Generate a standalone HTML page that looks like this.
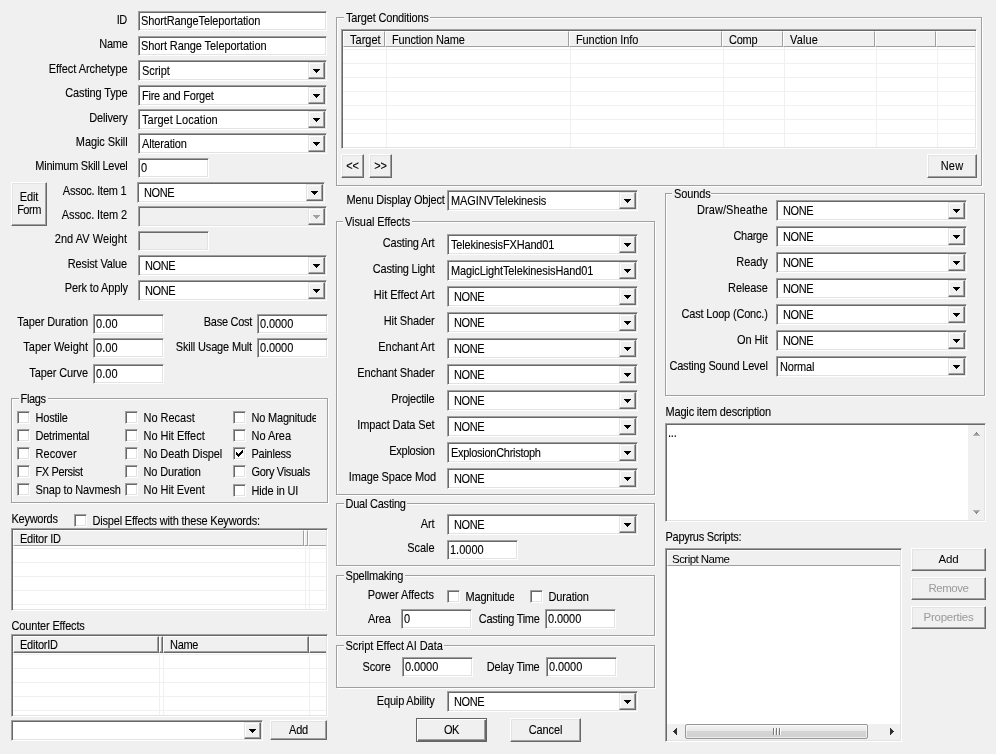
<!DOCTYPE html>
<html lang="en"><head><meta charset="utf-8"><title>Magic Effect</title>
<style>
html,body{margin:0;padding:0}
body{width:996px;height:754px;background:#f0f0f0;overflow:hidden;position:relative;font-family:"Liberation Sans",sans-serif;font-size:11px;color:#000}
div,i{box-sizing:border-box}
#g{position:absolute;left:0;top:0;width:996px;height:754px;will-change:transform;-webkit-text-stroke:0.1px #000}
.t{position:absolute;white-space:nowrap;line-height:13px;height:13px;font-size:11px;letter-spacing:-0.2px;transform:scaleY(1.09);transform-origin:0 10px}
.t.seg{font-size:11.5px;letter-spacing:-0.25px;transform:none}
.sunk{position:absolute;background:#fff;border:1px solid;border-color:#a0a0a0 #fff #fff #a0a0a0;box-shadow:inset 1px 1px 0 #696969,inset -1px -1px 0 #e3e3e3}
.sunk.dis{background:#f0f0f0}
.cb{position:absolute;width:17px;background:#f0f0f0;border:1px solid;border-color:#e3e3e3 #696969 #696969 #e3e3e3;box-shadow:inset -1px -1px 0 #a0a0a0,inset 1px 1px 0 #fff}
.cb i{position:absolute;left:4px;width:7px;height:4px;background:linear-gradient(#000,#000) 0 0/7px 1px no-repeat,linear-gradient(#000,#000) 1px 1px/5px 1px no-repeat,linear-gradient(#000,#000) 2px 2px/3px 1px no-repeat,linear-gradient(#000,#000) 3px 3px/1px 1px no-repeat}
.cb i.ad{background:linear-gradient(#a0a0a0,#a0a0a0) 0 0/7px 1px no-repeat,linear-gradient(#a0a0a0,#a0a0a0) 1px 1px/5px 1px no-repeat,linear-gradient(#a0a0a0,#a0a0a0) 2px 2px/3px 1px no-repeat,linear-gradient(#a0a0a0,#a0a0a0) 3px 3px/1px 1px no-repeat}
.btn{position:absolute;background:#f0f0f0;border:1px solid;border-color:#fff #696969 #696969 #fff;box-shadow:inset -1px -1px 0 #a0a0a0,inset 1px 1px 0 #e3e3e3}
.btn.def{border-color:#646464;box-shadow:inset 1px 1px 0 #fff,inset -1px -1px 0 #696969,inset -2px -2px 0 #a0a0a0}
.grp{position:absolute;border:1px solid #a0a0a0;box-shadow:1px 1px 0 #fff,inset 1px 1px 0 #fff}
.gl{position:absolute;background:#f0f0f0}
.chk{}
.hbg{position:absolute;background:#f0f0f0}
.hd{position:absolute}
.hd.flat{border-top:1px solid #fff;border-left:1px solid #fff;border-right:1px solid #a0a0a0;border-bottom:1px solid #a0a0a0}
.hd.flat.last{border-right:none}
.hd.btnh{border:1px solid;border-color:#fff #696969 #696969 #fff;box-shadow:inset -1px -1px 0 #a0a0a0}
.hd.btnh.last{border-right:none;box-shadow:inset 0 -1px 0 #a0a0a0}
.vg{position:absolute;width:1px;background:#f0f0f0}
.hg{position:absolute;height:1px;background:#f0f0f0}
.vsb{position:absolute;background:#f0f0f0}
.vsb i{position:absolute;left:5px;width:7px;height:4px}
.vsb i.up{top:7px;background:linear-gradient(#7a7a7a,#7a7a7a) 3px 0/1px 1px no-repeat,linear-gradient(#8c8c8c,#8c8c8c) 2px 1px/3px 1px no-repeat,linear-gradient(#a0a0a0,#a0a0a0) 1px 2px/5px 1px no-repeat,linear-gradient(#b4b4b4,#b4b4b4) 0 3px/7px 1px no-repeat}
.vsb i.dn{top:85px;background:linear-gradient(#b4b4b4,#b4b4b4) 0 0/7px 1px no-repeat,linear-gradient(#a0a0a0,#a0a0a0) 1px 1px/5px 1px no-repeat,linear-gradient(#8c8c8c,#8c8c8c) 2px 2px/3px 1px no-repeat,linear-gradient(#7a7a7a,#7a7a7a) 3px 3px/1px 1px no-repeat}
.hsb{position:absolute;background:#f0f0f0}
.hsb i.la{position:absolute;left:6px;top:4px;width:4px;height:7px;background:linear-gradient(#303030,#303030) 0 3px/1px 1px no-repeat,linear-gradient(#303030,#303030) 1px 2px/1px 3px no-repeat,linear-gradient(#303030,#303030) 2px 1px/1px 5px no-repeat,linear-gradient(#303030,#303030) 3px 0/1px 7px no-repeat}
.hsb i.ra{position:absolute;left:223px;top:4px;width:4px;height:7px;background:linear-gradient(#303030,#303030) 3px 3px/1px 1px no-repeat,linear-gradient(#303030,#303030) 2px 2px/1px 3px no-repeat,linear-gradient(#303030,#303030) 1px 1px/1px 5px no-repeat,linear-gradient(#303030,#303030) 0 0/1px 7px no-repeat}
.thumb{position:absolute;border:1px solid #979797;border-radius:2px;background:linear-gradient(#f4f4f4 0%,#e8e8e8 45%,#d4d4d4 50%,#d0d0d0 100%);box-shadow:inset 0 0 0 1px rgba(255,255,255,.6)}
.grip{position:absolute;left:87px;top:3px;width:8px;height:7px;background:linear-gradient(90deg,#787878 0 1px,#fff 1px 2px,transparent 2px 3px,#787878 3px 4px,#fff 4px 5px,transparent 5px 6px,#787878 6px 7px,#fff 7px 8px)}
</style></head>
<body>
<div id="g">
<div class="t " style="top:14px;left:-173.5px;width:300px;text-align:right;letter-spacing:-0.6px;">ID</div>
<div class="t " style="top:38px;left:-172.5px;width:300px;text-align:right;letter-spacing:-0.286px;">Name</div>
<div class="t " style="top:63px;left:-172.5px;width:300px;text-align:right;letter-spacing:-0.075px;">Effect Archetype</div>
<div class="t " style="top:87px;left:-172.5px;width:300px;text-align:right;letter-spacing:-0.151px;">Casting Type</div>
<div class="t " style="top:112px;left:-172.5px;width:300px;text-align:right;letter-spacing:-0.192px;">Delivery</div>
<div class="t " style="top:136px;left:-172.5px;width:300px;text-align:right;letter-spacing:-0.08px;">Magic Skill</div>
<div class="t " style="top:160px;left:-172.5px;width:300px;text-align:right;letter-spacing:-0.263px;">Minimum Skill Level</div>
<div class="t " style="top:185px;left:-173.5px;width:300px;text-align:right;letter-spacing:-0.226px;">Assoc. Item 1</div>
<div class="t " style="top:209px;left:-173px;width:300px;text-align:right;letter-spacing:-0.111px;">Assoc. Item 2</div>
<div class="t " style="top:233px;left:-173px;width:300px;text-align:right;letter-spacing:0.033px;">2nd AV Weight</div>
<div class="t " style="top:258px;left:-173px;width:300px;text-align:right;letter-spacing:-0.145px;">Resist Value</div>
<div class="t " style="top:282px;left:-172px;width:300px;text-align:right;letter-spacing:-0.125px;">Perk to Apply</div>
<div class="sunk" style="left:138px;top:11px;width:189px;height:20px"></div>
<div class="t " style="top:15px;left:141px;letter-spacing:-0.109px;">ShortRangeTeleportation</div>
<div class="sunk" style="left:138px;top:36px;width:189px;height:20px"></div>
<div class="t " style="top:40px;left:141px;letter-spacing:-0.086px;">Short Range Teleportation</div>
<div class="sunk" style="left:138px;top:60px;width:189px;height:21px"><div class="cb" style="left:169px;top:1px;height:17px"><i class="a" style="top:6px"></i></div></div>
<div class="t " style="top:65px;left:142px;letter-spacing:-0.071px;">Script</div>
<div class="sunk" style="left:138px;top:85px;width:189px;height:21px"><div class="cb" style="left:169px;top:1px;height:17px"><i class="a" style="top:6px"></i></div></div>
<div class="t " style="top:90px;left:142px;letter-spacing:-0.234px;">Fire and Forget</div>
<div class="sunk" style="left:138px;top:109px;width:189px;height:21px"><div class="cb" style="left:169px;top:1px;height:17px"><i class="a" style="top:6px"></i></div></div>
<div class="t " style="top:114px;left:142px;letter-spacing:0.032px;">Target Location</div>
<div class="sunk" style="left:138px;top:133px;width:189px;height:21px"><div class="cb" style="left:169px;top:1px;height:17px"><i class="a" style="top:6px"></i></div></div>
<div class="t " style="top:138px;left:142px;letter-spacing:-0.178px;">Alteration</div>
<div class="sunk" style="left:138px;top:158px;width:71px;height:20px"></div>
<div class="t " style="top:162px;left:141px;">0</div>
<div class="btn" style="left:11px;top:182px;width:36px;height:44px"></div>
<div class="t " style="top:191px;left:-121px;width:300px;text-align:center;letter-spacing:-0.067px;">Edit</div>
<div class="t " style="top:204px;left:-121px;width:300px;text-align:center;letter-spacing:-0.493px;">Form</div>
<div class="sunk" style="left:137px;top:182px;width:188px;height:21px"><div class="cb" style="left:168px;top:1px;height:17px"><i class="a" style="top:6px"></i></div></div>
<div class="t " style="top:187px;left:144px;letter-spacing:-0.395px;">NONE</div>
<div class="sunk dis" style="left:138px;top:206px;width:189px;height:21px"><div class="cb" style="left:169px;top:1px;height:17px"><i class="ad" style="top:6px"></i></div></div>
<div class="sunk dis" style="left:138px;top:231px;width:71px;height:20px"></div>
<div class="sunk" style="left:138px;top:255px;width:189px;height:21px"><div class="cb" style="left:169px;top:1px;height:17px"><i class="a" style="top:6px"></i></div></div>
<div class="t " style="top:260px;left:145px;letter-spacing:-0.395px;">NONE</div>
<div class="sunk" style="left:138px;top:280px;width:189px;height:21px"><div class="cb" style="left:169px;top:1px;height:17px"><i class="a" style="top:6px"></i></div></div>
<div class="t " style="top:285px;left:145px;letter-spacing:-0.395px;">NONE</div>
<div class="t " style="top:316px;left:-212px;width:300px;text-align:right;letter-spacing:-0.104px;">Taper Duration</div>
<div class="t " style="top:341px;left:-212px;width:300px;text-align:right;letter-spacing:0.008px;">Taper Weight</div>
<div class="t " style="top:367px;left:-212px;width:300px;text-align:right;letter-spacing:-0.111px;">Taper Curve</div>
<div class="sunk" style="left:93px;top:314px;width:71px;height:20px"></div>
<div class="t " style="top:318px;left:96px;letter-spacing:0.07px;">0.00</div>
<div class="sunk" style="left:93px;top:338px;width:71px;height:20px"></div>
<div class="t " style="top:342px;left:96px;letter-spacing:0.07px;">0.00</div>
<div class="sunk" style="left:93px;top:364px;width:71px;height:20px"></div>
<div class="t " style="top:368px;left:96px;letter-spacing:0.07px;">0.00</div>
<div class="t " style="top:316px;left:-48px;width:300px;text-align:right;letter-spacing:-0.283px;">Base Cost</div>
<div class="t " style="top:341px;left:-48px;width:300px;text-align:right;letter-spacing:-0.166px;">Skill Usage Mult</div>
<div class="sunk" style="left:257px;top:314px;width:71px;height:20px"></div>
<div class="t " style="top:318px;left:260px;letter-spacing:-0.076px;">0.0000</div>
<div class="sunk" style="left:257px;top:338px;width:71px;height:20px"></div>
<div class="t " style="top:342px;left:260px;letter-spacing:-0.076px;">0.0000</div>
<div class="grp" style="left:11px;top:398px;width:317px;height:105px"></div>
<div class="gl" style="left:18.5px;top:396px;width:29px;height:6px"></div>
<div class="t " style="top:393px;left:20.5px;letter-spacing:-0.341px;">Flags</div>
<div class="sunk chk" style="left:17px;top:411px;width:13px;height:13px"></div>
<div class="t " style="top:412px;left:35.5px;letter-spacing:-0.204px;">Hostile</div>
<div class="sunk chk" style="left:125px;top:411px;width:13px;height:13px"></div>
<div class="t " style="top:412px;left:143.5px;letter-spacing:-0.018px;">No Recast</div>
<div class="sunk chk" style="left:233px;top:411px;width:13px;height:13px"></div>
<div class="t " style="top:412px;left:251.5px;letter-spacing:-0.192px;width:64.5px;overflow:hidden;">No Magnitude</div>
<div class="sunk chk" style="left:17px;top:429px;width:13px;height:13px"></div>
<div class="t " style="top:430px;left:35.5px;letter-spacing:-0.232px;">Detrimental</div>
<div class="sunk chk" style="left:125px;top:429px;width:13px;height:13px"></div>
<div class="t " style="top:430px;left:143.5px;letter-spacing:-0.027px;">No Hit Effect</div>
<div class="sunk chk" style="left:233px;top:429px;width:13px;height:13px"></div>
<div class="t " style="top:430px;left:251.5px;letter-spacing:-0.036px;">No Area</div>
<div class="sunk chk" style="left:17px;top:447px;width:13px;height:13px"></div>
<div class="t " style="top:448px;left:35.5px;letter-spacing:0.033px;">Recover</div>
<div class="sunk chk" style="left:125px;top:447px;width:13px;height:13px"></div>
<div class="t " style="top:448px;left:143.5px;letter-spacing:-0.093px;">No Death Dispel</div>
<div class="sunk chk" style="left:233px;top:447px;width:13px;height:13px"><svg width="7" height="7" viewBox="0 0 7 7" style="position:absolute;left:2px;top:2px"><path d="M0 2h1v3h-1zM1 3h1v3h-1zM2 4h1v3h-1zM3 3h1v3h-1zM4 2h1v3h-1zM5 1h1v3h-1zM6 0h1v3h-1z" fill="#000" shape-rendering="crispEdges"/></svg></div>
<div class="t " style="top:448px;left:251.5px;letter-spacing:-0.26px;">Painless</div>
<div class="sunk chk" style="left:17px;top:465px;width:13px;height:13px"></div>
<div class="t " style="top:466px;left:35.5px;letter-spacing:-0.353px;">FX Persist</div>
<div class="sunk chk" style="left:125px;top:465px;width:13px;height:13px"></div>
<div class="t " style="top:466px;left:143.5px;letter-spacing:-0.137px;">No Duration</div>
<div class="sunk chk" style="left:233px;top:465px;width:13px;height:13px"></div>
<div class="t " style="top:466px;left:251.5px;letter-spacing:-0.313px;">Gory Visuals</div>
<div class="sunk chk" style="left:17px;top:483px;width:13px;height:13px"></div>
<div class="t " style="top:484px;left:35.5px;letter-spacing:-0.149px;">Snap to Navmesh</div>
<div class="sunk chk" style="left:125px;top:483px;width:13px;height:13px"></div>
<div class="t " style="top:484px;left:143.5px;letter-spacing:-0.046px;">No Hit Event</div>
<div class="sunk chk" style="left:233px;top:484px;width:13px;height:13px"></div>
<div class="t " style="top:485px;left:251.5px;letter-spacing:-0.16px;">Hide in UI</div>
<div class="t " style="top:513px;left:11.5px;letter-spacing:-0.262px;">Keywords</div>
<div class="sunk chk" style="left:74px;top:514px;width:13px;height:13px"></div>
<div class="t " style="top:515px;left:92.5px;letter-spacing:-0.19px;">Dispel Effects with these Keywords:</div>
<div class="sunk" style="left:11px;top:528px;width:317px;height:83px"></div>
<div class="hbg flat" style="left:13px;top:530px;width:313px;height:16px"></div>
<div class="hd flat" style="left:13px;top:530px;width:291px;height:16px"></div>
<div class="t " style="top:533px;left:20px;letter-spacing:-0.233px;">Editor ID</div>
<div class="vg" style="left:305px;top:546px;height:63px"></div>
<div class="hd flat" style="left:304px;top:530px;width:4px;height:16px"></div>
<div class="vg" style="left:309px;top:546px;height:63px"></div>
<div class="hd flat last" style="left:308px;top:530px;width:18px;height:16px"></div>
<div class="hg" style="left:13px;top:548px;width:313px"></div>
<div class="hg" style="left:13px;top:562px;width:313px"></div>
<div class="hg" style="left:13px;top:576px;width:313px"></div>
<div class="hg" style="left:13px;top:590px;width:313px"></div>
<div class="hg" style="left:13px;top:604px;width:313px"></div>
<div class="t " style="top:620px;left:11.5px;letter-spacing:-0.162px;">Counter Effects</div>
<div class="sunk" style="left:11px;top:634px;width:317px;height:83px"></div>
<div class="hbg btnh" style="left:13px;top:636px;width:313px;height:17px"></div>
<div class="hd btnh" style="left:13px;top:636px;width:146px;height:17px"></div>
<div class="t " style="top:639px;left:20px;letter-spacing:-0.256px;">EditorID</div>
<div class="vg" style="left:159px;top:653px;height:62px"></div>
<div class="hd btnh" style="left:159px;top:636px;width:4px;height:17px"></div>
<div class="vg" style="left:163px;top:653px;height:62px"></div>
<div class="hd btnh" style="left:163px;top:636px;width:146px;height:17px"></div>
<div class="t " style="top:639px;left:170px;letter-spacing:-0.286px;">Name</div>
<div class="vg" style="left:309px;top:653px;height:62px"></div>
<div class="hd btnh last" style="left:309px;top:636px;width:17px;height:17px"></div>
<div class="hg" style="left:13px;top:654px;width:313px"></div>
<div class="hg" style="left:13px;top:668px;width:313px"></div>
<div class="hg" style="left:13px;top:682px;width:313px"></div>
<div class="hg" style="left:13px;top:696px;width:313px"></div>
<div class="hg" style="left:13px;top:710px;width:313px"></div>
<div class="sunk" style="left:11px;top:720px;width:252px;height:21px"><div class="cb" style="left:232px;top:1px;height:17px"><i class="a" style="top:6px"></i></div></div>
<div class="btn" style="left:270px;top:720px;width:57px;height:20px"></div>
<div class="t " style="top:724px;left:148.5px;width:300px;text-align:center;">Add</div>
<div class="grp" style="left:336px;top:17px;width:646px;height:169px"></div>
<div class="gl" style="left:344px;top:15px;width:86px;height:6px"></div>
<div class="t " style="top:12px;left:346px;letter-spacing:-0.171px;">Target Conditions</div>
<div class="sunk" style="left:341px;top:29px;width:636px;height:120px"></div>
<div class="hbg flat" style="left:343px;top:31px;width:632px;height:16px"></div>
<div class="hd flat" style="left:343px;top:31px;width:42px;height:16px"></div>
<div class="t " style="top:34px;left:350px;letter-spacing:0.02px;">Target</div>
<div class="vg" style="left:386px;top:47px;height:100px"></div>
<div class="hd flat" style="left:385px;top:31px;width:184px;height:16px"></div>
<div class="t " style="top:34px;left:392px;letter-spacing:-0.146px;">Function Name</div>
<div class="vg" style="left:570px;top:47px;height:100px"></div>
<div class="hd flat" style="left:569px;top:31px;width:153px;height:16px"></div>
<div class="t " style="top:34px;left:576px;letter-spacing:-0.107px;">Function Info</div>
<div class="vg" style="left:723px;top:47px;height:100px"></div>
<div class="hd flat" style="left:722px;top:31px;width:61px;height:16px"></div>
<div class="t " style="top:34px;left:729px;letter-spacing:-0.261px;">Comp</div>
<div class="vg" style="left:784px;top:47px;height:100px"></div>
<div class="hd flat" style="left:783px;top:31px;width:92px;height:16px"></div>
<div class="t " style="top:34px;left:790px;letter-spacing:0.134px;">Value</div>
<div class="vg" style="left:876px;top:47px;height:100px"></div>
<div class="hd flat" style="left:875px;top:31px;width:61px;height:16px"></div>
<div class="vg" style="left:937px;top:47px;height:100px"></div>
<div class="hd flat last" style="left:936px;top:31px;width:39px;height:16px"></div>
<div class="hg" style="left:343px;top:49px;width:632px"></div>
<div class="hg" style="left:343px;top:63px;width:632px"></div>
<div class="hg" style="left:343px;top:77px;width:632px"></div>
<div class="hg" style="left:343px;top:91px;width:632px"></div>
<div class="hg" style="left:343px;top:105px;width:632px"></div>
<div class="hg" style="left:343px;top:119px;width:632px"></div>
<div class="hg" style="left:343px;top:133px;width:632px"></div>
<div class="btn" style="left:341px;top:154px;width:23px;height:24px"></div>
<div class="t " style="top:160px;left:202.5px;width:300px;text-align:center;">&lt;&lt;</div>
<div class="btn" style="left:369px;top:154px;width:23px;height:24px"></div>
<div class="t " style="top:160px;left:230.5px;width:300px;text-align:center;">&gt;&gt;</div>
<div class="btn" style="left:927px;top:154px;width:50px;height:24px"></div>
<div class="t " style="top:160px;left:802.0px;width:300px;text-align:center;letter-spacing:0.195px;">New</div>
<div class="t " style="top:194px;left:346.5px;letter-spacing:-0.174px;">Menu Display Object</div>
<div class="sunk" style="left:447px;top:190px;width:191px;height:21px"><div class="cb" style="left:171px;top:1px;height:17px"><i class="a" style="top:6px"></i></div></div>
<div class="t " style="top:195px;left:451px;letter-spacing:-0.118px;">MAGINVTelekinesis</div>
<div class="grp" style="left:336px;top:221px;width:319px;height:274px"></div>
<div class="gl" style="left:343px;top:219px;width:68.5px;height:6px"></div>
<div class="t " style="top:216px;left:345px;letter-spacing:-0.075px;">Visual Effects</div>
<div class="t " style="top:237px;left:134.5px;width:300px;text-align:right;letter-spacing:-0.192px;">Casting Art</div>
<div class="sunk" style="left:447px;top:234px;width:191px;height:21px"><div class="cb" style="left:171px;top:1px;height:17px"><i class="a" style="top:6px"></i></div></div>
<div class="t " style="top:239px;left:451px;letter-spacing:-0.168px;">TelekinesisFXHand01</div>
<div class="t " style="top:263px;left:134.5px;width:300px;text-align:right;letter-spacing:-0.194px;">Casting Light</div>
<div class="sunk" style="left:447px;top:260px;width:191px;height:21px"><div class="cb" style="left:171px;top:1px;height:17px"><i class="a" style="top:6px"></i></div></div>
<div class="t " style="top:265px;left:451px;letter-spacing:-0.123px;">MagicLightTelekinesisHand01</div>
<div class="t " style="top:289px;left:134.5px;width:300px;text-align:right;letter-spacing:-0.017px;">Hit Effect Art</div>
<div class="sunk" style="left:447px;top:286px;width:191px;height:21px"><div class="cb" style="left:171px;top:1px;height:17px"><i class="a" style="top:6px"></i></div></div>
<div class="t " style="top:291px;left:454px;letter-spacing:-0.395px;">NONE</div>
<div class="t " style="top:315px;left:134.5px;width:300px;text-align:right;letter-spacing:-0.128px;">Hit Shader</div>
<div class="sunk" style="left:447px;top:312px;width:191px;height:21px"><div class="cb" style="left:171px;top:1px;height:17px"><i class="a" style="top:6px"></i></div></div>
<div class="t " style="top:317px;left:454px;letter-spacing:-0.395px;">NONE</div>
<div class="t " style="top:341px;left:134.5px;width:300px;text-align:right;letter-spacing:-0.061px;">Enchant Art</div>
<div class="sunk" style="left:447px;top:338px;width:191px;height:21px"><div class="cb" style="left:171px;top:1px;height:17px"><i class="a" style="top:6px"></i></div></div>
<div class="t " style="top:343px;left:454px;letter-spacing:-0.395px;">NONE</div>
<div class="t " style="top:367px;left:134.5px;width:300px;text-align:right;letter-spacing:-0.121px;">Enchant Shader</div>
<div class="sunk" style="left:447px;top:364px;width:191px;height:21px"><div class="cb" style="left:171px;top:1px;height:17px"><i class="a" style="top:6px"></i></div></div>
<div class="t " style="top:369px;left:454px;letter-spacing:-0.395px;">NONE</div>
<div class="t " style="top:393px;left:134.5px;width:300px;text-align:right;letter-spacing:-0.205px;">Projectile</div>
<div class="sunk" style="left:447px;top:390px;width:191px;height:21px"><div class="cb" style="left:171px;top:1px;height:17px"><i class="a" style="top:6px"></i></div></div>
<div class="t " style="top:395px;left:454px;letter-spacing:-0.395px;">NONE</div>
<div class="t " style="top:419px;left:134.5px;width:300px;text-align:right;letter-spacing:-0.112px;">Impact Data Set</div>
<div class="sunk" style="left:447px;top:416px;width:191px;height:21px"><div class="cb" style="left:171px;top:1px;height:17px"><i class="a" style="top:6px"></i></div></div>
<div class="t " style="top:421px;left:454px;letter-spacing:-0.395px;">NONE</div>
<div class="t " style="top:445px;left:134.5px;width:300px;text-align:right;letter-spacing:-0.278px;">Explosion</div>
<div class="sunk" style="left:447px;top:442px;width:191px;height:21px"><div class="cb" style="left:171px;top:1px;height:17px"><i class="a" style="top:6px"></i></div></div>
<div class="t " style="top:447px;left:451px;letter-spacing:-0.282px;">ExplosionChristoph</div>
<div class="t " style="top:471px;left:136px;width:300px;text-align:right;letter-spacing:-0.139px;">Image Space Mod</div>
<div class="sunk" style="left:447px;top:468px;width:191px;height:21px"><div class="cb" style="left:171px;top:1px;height:17px"><i class="a" style="top:6px"></i></div></div>
<div class="t " style="top:473px;left:454px;letter-spacing:-0.395px;">NONE</div>
<div class="grp" style="left:336px;top:503px;width:319px;height:63px"></div>
<div class="gl" style="left:343.5px;top:501px;width:63.5px;height:6px"></div>
<div class="t " style="top:498px;left:345.5px;letter-spacing:-0.232px;">Dual Casting</div>
<div class="t " style="top:518px;left:134.5px;width:300px;text-align:right;letter-spacing:-0.121px;">Art</div>
<div class="sunk" style="left:447px;top:514px;width:191px;height:21px"><div class="cb" style="left:171px;top:1px;height:17px"><i class="a" style="top:6px"></i></div></div>
<div class="t " style="top:519px;left:454px;letter-spacing:-0.395px;">NONE</div>
<div class="t " style="top:542px;left:134.5px;width:300px;text-align:right;letter-spacing:-0.066px;">Scale</div>
<div class="sunk" style="left:447px;top:540px;width:71px;height:20px"></div>
<div class="t " style="top:544px;left:450px;letter-spacing:0.007px;">1.0000</div>
<div class="grp" style="left:336px;top:575px;width:319px;height:61px"></div>
<div class="gl" style="left:343.5px;top:573px;width:61px;height:6px"></div>
<div class="t " style="top:570px;left:345.5px;letter-spacing:-0.202px;">Spellmaking</div>
<div class="t " style="top:589px;left:134px;width:300px;text-align:right;letter-spacing:-0.066px;">Power Affects</div>
<div class="sunk chk" style="left:447px;top:590px;width:13px;height:13px"></div>
<div class="t " style="top:591px;left:465.5px;letter-spacing:-0.186px;width:48px;overflow:hidden;">Magnitude</div>
<div class="sunk chk" style="left:530px;top:590px;width:13px;height:13px"></div>
<div class="t " style="top:591px;left:548.5px;letter-spacing:-0.172px;">Duration</div>
<div class="t " style="top:613px;left:368px;letter-spacing:-0.138px;">Area</div>
<div class="sunk" style="left:401px;top:609px;width:71px;height:20px"></div>
<div class="t " style="top:613px;left:404px;">0</div>
<div class="t " style="top:613px;left:239.5px;width:300px;text-align:right;letter-spacing:-0.292px;">Casting Time</div>
<div class="sunk" style="left:545px;top:609px;width:71px;height:20px"></div>
<div class="t " style="top:613px;left:548px;letter-spacing:-0.076px;">0.0000</div>
<div class="grp" style="left:336px;top:645px;width:319px;height:43px"></div>
<div class="gl" style="left:343.5px;top:643px;width:100.5px;height:6px"></div>
<div class="t " style="top:640px;left:345.5px;letter-spacing:-0.049px;">Script Effect AI Data</div>
<div class="t " style="top:661px;left:362.5px;letter-spacing:-0.11px;">Score</div>
<div class="sunk" style="left:402px;top:657px;width:71px;height:20px"></div>
<div class="t " style="top:661px;left:405px;letter-spacing:-0.076px;">0.0000</div>
<div class="t " style="top:661px;left:239.5px;width:300px;text-align:right;letter-spacing:-0.233px;">Delay Time</div>
<div class="sunk" style="left:546px;top:657px;width:71px;height:20px"></div>
<div class="t " style="top:661px;left:549px;letter-spacing:-0.076px;">0.0000</div>
<div class="t " style="top:695px;left:134.5px;width:300px;text-align:right;letter-spacing:-0.172px;">Equip Ability</div>
<div class="sunk" style="left:447px;top:691px;width:191px;height:21px"><div class="cb" style="left:171px;top:1px;height:17px"><i class="a" style="top:6px"></i></div></div>
<div class="t " style="top:696px;left:454px;letter-spacing:-0.395px;">NONE</div>
<div class="btn def" style="left:416px;top:718px;width:71px;height:24px"></div>
<div class="t " style="top:724px;left:301.5px;width:300px;text-align:center;letter-spacing:-0.353px;">OK</div>
<div class="btn" style="left:510px;top:718px;width:71px;height:24px"></div>
<div class="t " style="top:724px;left:395.5px;width:300px;text-align:center;letter-spacing:-0.092px;">Cancel</div>
<div class="grp" style="left:665px;top:193px;width:320px;height:203px"></div>
<div class="gl" style="left:672px;top:191px;width:39px;height:6px"></div>
<div class="t " style="top:188px;left:674px;letter-spacing:-0.102px;">Sounds</div>
<div class="t " style="top:204px;left:467.70000000000005px;width:300px;text-align:right;letter-spacing:0.082px;">Draw/Sheathe</div>
<div class="sunk" style="left:776px;top:200px;width:191px;height:21px"><div class="cb" style="left:171px;top:1px;height:17px"><i class="a" style="top:6px"></i></div></div>
<div class="t " style="top:205px;left:783px;letter-spacing:-0.395px;">NONE</div>
<div class="t " style="top:230px;left:467.70000000000005px;width:300px;text-align:right;letter-spacing:-0.313px;">Charge</div>
<div class="sunk" style="left:776px;top:226px;width:191px;height:21px"><div class="cb" style="left:171px;top:1px;height:17px"><i class="a" style="top:6px"></i></div></div>
<div class="t " style="top:231px;left:783px;letter-spacing:-0.395px;">NONE</div>
<div class="t " style="top:256px;left:467.70000000000005px;width:300px;text-align:right;letter-spacing:-0.079px;">Ready</div>
<div class="sunk" style="left:776px;top:252px;width:191px;height:21px"><div class="cb" style="left:171px;top:1px;height:17px"><i class="a" style="top:6px"></i></div></div>
<div class="t " style="top:257px;left:783px;letter-spacing:-0.395px;">NONE</div>
<div class="t " style="top:282px;left:467.70000000000005px;width:300px;text-align:right;letter-spacing:-0.108px;">Release</div>
<div class="sunk" style="left:776px;top:278px;width:191px;height:21px"><div class="cb" style="left:171px;top:1px;height:17px"><i class="a" style="top:6px"></i></div></div>
<div class="t " style="top:283px;left:783px;letter-spacing:-0.395px;">NONE</div>
<div class="t " style="top:308px;left:467.70000000000005px;width:300px;text-align:right;letter-spacing:-0.186px;">Cast Loop (Conc.)</div>
<div class="sunk" style="left:776px;top:304px;width:191px;height:21px"><div class="cb" style="left:171px;top:1px;height:17px"><i class="a" style="top:6px"></i></div></div>
<div class="t " style="top:309px;left:783px;letter-spacing:-0.395px;">NONE</div>
<div class="t " style="top:334px;left:467.70000000000005px;width:300px;text-align:right;letter-spacing:-0.081px;">On Hit</div>
<div class="sunk" style="left:776px;top:330px;width:191px;height:21px"><div class="cb" style="left:171px;top:1px;height:17px"><i class="a" style="top:6px"></i></div></div>
<div class="t " style="top:335px;left:783px;letter-spacing:-0.395px;">NONE</div>
<div class="t " style="top:360px;left:467.70000000000005px;width:300px;text-align:right;letter-spacing:-0.169px;">Casting Sound Level</div>
<div class="sunk" style="left:776px;top:356px;width:191px;height:21px"><div class="cb" style="left:171px;top:1px;height:17px"><i class="a" style="top:6px"></i></div></div>
<div class="t " style="top:361px;left:780px;letter-spacing:-0.209px;">Normal</div>
<div class="t " style="top:406px;left:665.5px;letter-spacing:-0.179px;">Magic item description</div>
<div class="sunk" style="left:665px;top:423px;width:321px;height:99px"></div>
<div class="vsb" style="left:968px;top:425px;width:16px;height:95px"><i class="up"></i><i class="dn"></i></div>
<div class="t " style="top:427px;left:668px;">...</div>
<div class="t " style="top:531px;left:665.5px;letter-spacing:-0.275px;">Papyrus Scripts:</div>
<div class="sunk" style="left:665px;top:548px;width:237px;height:194px"></div>
<div class="hbg flat" style="left:667px;top:550px;width:233px;height:16px"></div>
<div class="hd flat last" style="left:667px;top:550px;width:233px;height:16px"></div>
<div class="hsb" style="left:667px;top:724px;width:233px;height:16px"><i class="la"></i><i class="ra"></i><div class="thumb" style="left:18px;top:0px;width:183px;height:15px"><i class="grip"></i></div></div>
<div class="btn" style="left:911px;top:548px;width:75px;height:23px"></div>
<div class="btn" style="left:911px;top:577px;width:75px;height:23px"></div>
<div class="btn" style="left:911px;top:606px;width:75px;height:23px"></div>
</div>
<div class="t seg" style="top:553px;left:672px;letter-spacing:-0.535px;">Script Name</div>
<div class="t seg" style="top:553px;left:798.5px;width:300px;text-align:center;letter-spacing:-0.123px;">Add</div>
<div class="t seg" style="top:582px;left:798.5px;width:300px;text-align:center;letter-spacing:-0.471px;color:#9a9a9a;">Remove</div>
<div class="t seg" style="top:611px;left:798.5px;width:300px;text-align:center;letter-spacing:-0.252px;color:#9a9a9a;">Properties</div>
</body></html>
